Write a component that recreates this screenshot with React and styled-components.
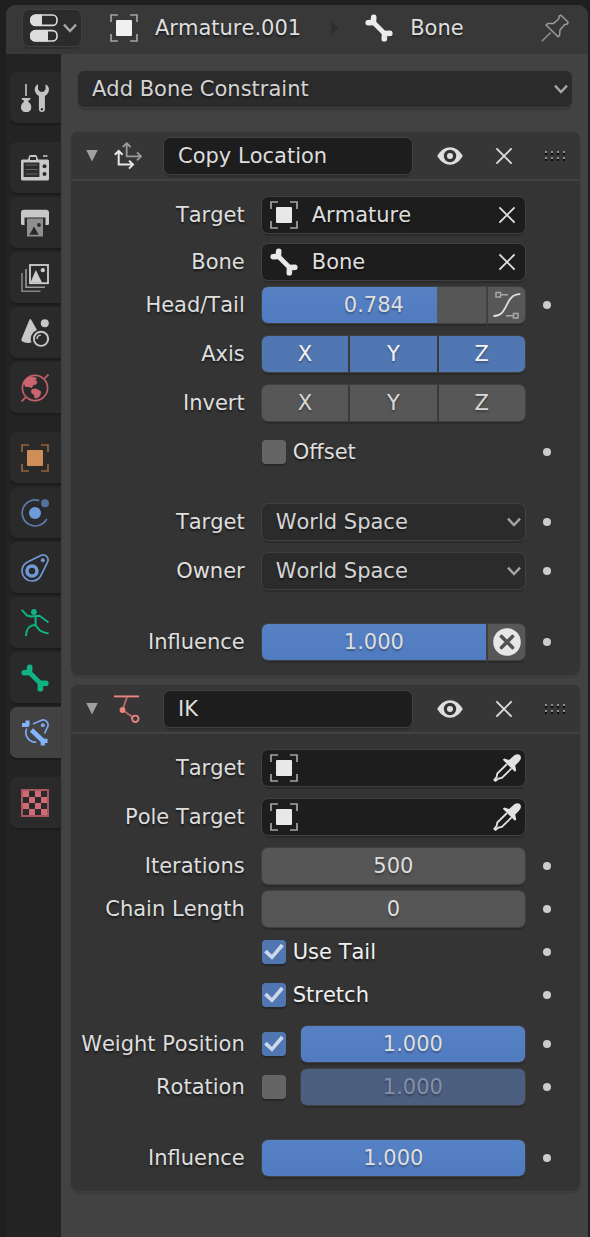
import React, { useState } from 'react';
import styled, { createGlobalStyle, css } from 'styled-components';

const GlobalStyle = createGlobalStyle`
  *, *::before, *::after { box-sizing: border-box; }
  body {
    margin: 0;
    background: #1f1f1f;
    color: #dedede;
    font-family: "DejaVu Sans", Verdana, sans-serif;
    font-size: 21px;
    font-kerning: none;
    line-height: 26px;
  }
  button, input, select { font: inherit; font-kerning: none; color: inherit; margin: 0; }
`;

/* ---------- shell ---------- */

const Page = styled.div`
  min-height: 100vh;
  padding: 5px 2px 0 6px;
  display: flex;
`;

const Editor = styled.div`
  flex: 1;
  min-width: 0;
  display: flex;
  flex-direction: column;
  border-radius: 10px 10px 0 0;
  overflow: hidden;
  background: #424242;
`;

const Header = styled.header`
  display: flex;
  align-items: center;
  height: 49px;
  padding: 0 19px 3px 17px;
  background: #383838;
  text-shadow: 0 2px 2px rgba(0, 0, 0, 0.5);
`;

const Body = styled.div`
  flex: 1;
  display: flex;
`;

const Sidebar = styled.nav`
  flex: none;
  width: 55px;
  padding: 18px 0 18px 4px;
  display: flex;
  flex-direction: column;
  gap: 19px;
  background: #232323;
`;

const TabGroup = styled.div`
  display: flex;
  flex-direction: column;
  gap: 4px;
`;

const Tab = styled.button`
  display: flex;
  align-items: center;
  height: 51px;
  padding: 0 0 0 11px;
  border: 0;
  border-radius: 7px 0 0 7px;
  background: ${(p) => (p.$active ? '#424242' : '#2a2a2a')};
  box-shadow: 0 2px 1px #1c1c1c;
`;

const Content = styled.main`
  flex: 1;
  min-width: 0;
  padding: 17px 8px 45px 10px;
`;

/* ---------- shared control looks ---------- */

const emboss = css`
  border: 0;
  border-radius: 6px;
  box-shadow: 0 0 0 1px #404040, 0 3px 1px rgba(0, 0, 0, 0.18);
`;

const IconButton = styled.button`
  flex: none;
  display: flex;
  align-items: center;
  justify-content: center;
  width: 28px;
  height: 36px;
  padding: 0;
  border: 0;
  background: none;
`;

const EditorTypeButton = styled.button`
  ${emboss}
  display: flex;
  align-items: center;
  gap: 5px;
  height: 36px;
  padding: 0 4px 0 7px;
  background: #2b2b2b;
`;

const Crumb = styled.div`
  display: flex;
  align-items: center;
  gap: 17px;
  margin-left: ${(p) => p.$before}px;
`;

const CrumbArrow = styled.span`
  width: 8px;
  height: 12px;
  margin-left: 30px;
  background: #2e2e2e;
  clip-path: polygon(0 0, 100% 50%, 0 100%);
`;

const PinButton = styled(IconButton)`
  margin-left: auto;
`;

const SelectWrap = styled.div`
  flex: 1;
  min-width: 0;
  display: grid;
  grid-template-columns: minmax(0, 1fr) 18px;
  align-items: center;

  > svg { grid-area: 1 / 2; pointer-events: none; }
`;

const Select = styled.select`
  ${emboss}
  grid-area: 1 / 1 / 2 / 3;
  appearance: none;
  width: 100%;
  height: 36px;
  padding: 0 26px 0 14px;
  background: #2b2b2b;
  color: #d4d4d4;
  text-shadow: 0 2px 2px rgba(0, 0, 0, 0.4);
`;

const AddRow = styled.div`
  display: flex;
  padding: 0 8px 25px 7px;
`;

/* ---------- panels ---------- */

const Panels = styled.div`
  display: flex;
  flex-direction: column;
  gap: 10px;
`;

const Panel = styled.section`
  border-radius: 8px;
  background: #343434;
  box-shadow: 0 0 0 1px #3f3f3f, 0 3px 0 #3c3c3c;
`;

const PanelHeader = styled.div`
  display: flex;
  align-items: center;
  height: 49px;
  padding: 0 14px 0 15px;
  border-bottom: 2px solid #414141;
  border-radius: 8px 8px 0 0;
  background: #363636;
`;

const Disclosure = styled.button`
  flex: none;
  width: 12px;
  height: 12px;
  margin-right: 16px;
  padding: 0;
  border: 0;
  background: #a0a0a0;
  clip-path: polygon(0 0, 100% 0, 50% 100%);
`;

const NameInput = styled.input`
  ${emboss}
  flex: 1;
  min-width: 0;
  height: 36px;
  margin: 0 24px 0 22px;
  padding: 0 14px;
  background: #1d1d1d;
  color: #dedede;
`;

const PanelActions = styled.div`
  display: flex;
  align-items: center;
  gap: 26px;
`;

const PanelBody = styled.div`
  padding: 16px 0 15px;
  text-shadow: 0 2px 2px rgba(0, 0, 0, 0.5);
`;

const gaps = { none: 0, tight: 7, field: 11, loose: 13, group: 34, section: 35 };

const Row = styled.div`
  display: grid;
  grid-template-columns: minmax(0, 33fr) minmax(0, 50fr) 10px;
  column-gap: 17px;
  align-items: center;
  height: 36px;
  margin-top: ${(p) => gaps[p.$gap]}px;
  padding-right: 28px;
`;

const RowLabel = styled.label`
  grid-column: 1;
  justify-self: end;
  white-space: nowrap;
`;

const Control = styled.div`
  grid-column: 2;
  display: flex;
  align-items: center;
`;

const KeyDot = styled.button`
  grid-column: 3;
  justify-self: center;
  width: 8px;
  height: 8px;
  padding: 0;
  border: 0;
  border-radius: 50%;
  background: #cccccc;
`;

const IdField = styled.div`
  ${emboss}
  flex: 1;
  min-width: 0;
  display: flex;
  align-items: center;
  height: 36px;
  padding: 0 4px 0 8px;
  background: #1d1d1d;
`;

const IdInput = styled.input`
  flex: 1;
  min-width: 0;
  height: 36px;
  padding: 0 0 0 14px;
  border: 0;
  background: none;
  text-shadow: inherit;
`;

const NumberField = styled.input`
  ${emboss}
  flex: 1;
  min-width: 0;
  height: 36px;
  padding: 0;
  text-align: center;
  text-shadow: 0 2px 2px rgba(0, 0, 0, 0.3);
  border-radius: ${(p) => (p.$joined ? '6px 0 0 6px' : '6px')};
  color: ${(p) => (p.disabled ? '#8390a5' : '#dedede')};
  background: ${(p) =>
    p.disabled
      ? '#4c5f80'
      : `linear-gradient(90deg, transparent ${p.$fill}%, #565656 ${p.$fill}%),
         linear-gradient(#5781c5, #517bc0)`};
`;

const SideButton = styled.button`
  ${emboss}
  flex: none;
  display: flex;
  align-items: center;
  justify-content: center;
  width: 37px;
  height: 36px;
  margin-left: 2px;
  padding: 0;
  border-radius: 0 6px 6px 0;
  background: #575757;
`;

const Segments = styled.div`
  ${emboss}
  flex: 1;
  display: grid;
  grid-template-columns: repeat(3, 1fr);
  gap: 2px;
  overflow: hidden;
  background: #3a3a3a;
`;

const Segment = styled.button`
  height: 36px;
  padding: 0;
  border: 0;
  text-shadow: 0 2px 2px rgba(0, 0, 0, 0.3);
  background: ${(p) => (p['aria-pressed'] ? '#5177b3' : '#575757')};
  color: ${(p) => (p['aria-pressed'] ? '#f2f2f2' : '#d8d8d8')};
`;

const CheckLabel = styled.label`
  display: flex;
  align-items: center;
  gap: 7px;
  color: ${(p) => (p.$on ? '#f0f0f0' : '#dedede')};
`;

const CheckBox = styled.input`
  appearance: none;
  flex: none;
  width: 24px;
  height: 24px;
  margin-right: ${(p) => (p.$spaced ? 15 : 0)}px;
  border-radius: 4px;
  background: #656565;
  box-shadow: 0 2px 1px rgba(0, 0, 0, 0.25);

  &:checked { background: #5177b3; }
  &:checked::before {
    content: "";
    display: block;
    height: 24px;
    background: #ccd8ea;
    clip-path: polygon(10% 52%, 21% 41%, 42% 61%, 80% 16%, 92% 26%, 43% 82%);
  }
`;

/* ---------- icons ---------- */

const Icon = ({ children }) => (
  <svg width="28" height="28" viewBox="0 0 28 28" fill="none" aria-hidden="true">
    {children}
  </svg>
);

const ChevronIcon = () => (
  <svg width="14" height="10" viewBox="0 0 14 10" fill="none" aria-hidden="true">
    <path d="M1 1.700 7 8 13 1.700" stroke="#a6a6a6" strokeWidth="2.400" />
  </svg>
);

const PropertiesIcon = () => (
  <Icon>
    <rect x="1" y="1" width="26" height="10.4" rx="4.5" stroke="#dcdcdc" strokeWidth="1.6" />
    <path d="M12 .5H5.5a5.3 5.3 0 0 0 0 11.400H12z" fill="#dcdcdc" />
    <rect x="1" y="16.6" width="26" height="10.4" rx="4.5" stroke="#dcdcdc" strokeWidth="1.6" />
    <path d="M18 16H5.5a5.6 5.6 0 0 0 0 11.600H18z" fill="#dcdcdc" />
  </Icon>
);

const ObjectIcon = ({ fill = '#e8e8e8', frame = '#a3a3a3' }) => (
  <Icon>
    <path d="M1 8V1h7M20 1h7v7M27 20v7h-7M8 27H1v-7" stroke={frame} strokeWidth="1.7" />
    <rect x="6" y="6" width="16" height="16" rx="1" fill={fill} />
  </Icon>
);

const BoneIcon = ({ color = '#ececec' }) => (
  <Icon>
    <path d="M8 8 20 20" stroke={color} strokeWidth="4.6" />
    <path
      d="M8.700 3.200 8.400 8.400 3.200 8.700M24.800 19.300 19.600 19.600 19.300 24.800"
      stroke={color} strokeWidth="5.600" strokeLinecap="round" strokeLinejoin="round"
    />
  </Icon>
);

const PinIcon = () => (
  <Icon>
    <path
      d="M20 1.2 27 8 26.5 10 23.8 10.4 19 16 18.6 21.4 17 22.8 5 11 6.8 9.6 12.3 9.6 17.8 4.8 18.2 2Z"
      stroke="#9a9a9a" strokeWidth="1.5" strokeLinejoin="round"
    />
    <path d="M9.6 18.6.8 27.3" stroke="#8c8c8c" strokeWidth="1.5" />
  </Icon>
);

const ToolIcon = () => (
  <Icon>
    <path d="M5 0v12" stroke="#a8a8a8" strokeWidth="2" />
    <path d="M.8 14h8.600v1.600l-2 1v1.500c2 1.400 2.900 3 2.900 5.100 0 3-2 5-5.200 5S0 26.200 0 23.200c0-2 .9-3.700 2.800-5.100v-1.500l-2-1z" fill="#c4c4c4" />
    <path
      fillRule="evenodd"
      d="M17 .2C13.600 2.200 13 5.300 14.500 8.600c.7 1.500 1.800 2.500 3.400 3.400V25a3 3 0 0 0 6 0V12c1.600-.9 2.700-1.900 3.300-3.400C28.700 5.300 28 2.200 24.600.2V5.200L22.700 7.800H19L17 5.200zM20.900 24a1.200 1.200 0 1 1 0 2.400 1.200 1.200 0 0 1 0-2.400z"
      fill="#c4c4c4"
    />
  </Icon>
);

const RenderIcon = () => (
  <Icon>
    <path
      fillRule="evenodd"
      d="M7 5.500 8 2.200Q8.500 1 9.500 1h5q1 0 1.500 1.200L17 5.500h9.500q1.500 0 1.500 1.500V25q0 1.500-1.500 1.500h-25Q0 26.500 0 25V7q0-1.500 1.500-1.500zM9 3v3h6v-3z"
      fill="#c8c8c8"
    />
    <path d="M22 2h4.500" stroke="#c8c8c8" strokeWidth="1.600" />
    <rect x="2.600" y="8.500" width="15.800" height="14.500" fill="#2c2c2c" />
    <path d="M4.500 11h12M4.500 15.500h12M4.500 20h12" stroke="#666" strokeWidth="1" />
    <circle cx="23.500" cy="12.200" r="2" fill="#2a2a2a" />
    <circle cx="23.500" cy="20" r="2" fill="#2a2a2a" />
  </Icon>
);

const OutputIcon = () => (
  <Icon>
    <path d="M6 9.500h16V27.500H6z" fill="#8f8f8f" />
    <path d="M8.400 25.800 13 17.500l4.700 8.300z" fill="#2a2a2a" />
    <circle cx="18" cy="16" r="1.900" fill="#2a2a2a" />
    <path d="M3 .7h22q3 0 3 3V14.500q0 1.500-1.500 1.500H24.500V8.500H3.500V16H1.500Q0 16 0 14.500V3.700q0-3 3-3z" fill="#c8c8c8" />
  </Icon>
);

const ViewLayerIcon = () => (
  <Icon>
    <path d="M1 9v18.200h18.500" stroke="#858585" strokeWidth="1.600" />
    <path d="M5 5v18.200h19" stroke="#9a9a9a" strokeWidth="1.600" />
    <rect x="9" y="1" width="18" height="18.200" stroke="#cfcfcf" strokeWidth="1.800" />
    <path d="M9.500 18.500 14.800 6 21 18.500z" fill="#cfcfcf" />
    <circle cx="21.800" cy="6.200" r="2.100" fill="#cfcfcf" />
  </Icon>
);

const SceneIcon = () => (
  <Icon>
    <path d="M8.400.8q1-1.400 1.800 0L16 11a9.500 9.500 0 0 0-5.500 12.500Q5 24.800 1.400 22.500 0 21.500.5 20z" fill="#c8c8c8" />
    <circle cx="23.800" cy="4.200" r="4" fill="#c8c8c8" />
    <circle cx="20" cy="19.800" r="7.100" stroke="#c8c8c8" strokeWidth="1.900" />
    <path d="M16 20a4 4 0 0 1 3.800-4" stroke="#c8c8c8" strokeWidth="1.600" />
  </Icon>
);

const WorldIcon = () => (
  <Icon>
    <circle cx="14" cy="14" r="12.600" stroke="#c25f69" strokeWidth="1.700" />
    <path d="M.5 27.500 4.600 23.400M23.400 4.600 27.500.5" stroke="#c25f69" strokeWidth="1.700" />
    <path
      d="M3 8.500 6 4.500 11 3 15.500 4.500 13.500 6.500 16 7.500 15 10 12.500 10.500 10.500 13.500 8 12.500 4.500 12.500zM11 15.500l4-.500 4.500 2.500-.5 3.500-2 2.500-3 .5-.500-3-3-2.500z"
      fill="#cb6670" stroke="#cb6670" strokeWidth="1" strokeLinejoin="round"
    />
  </Icon>
);

const PhysicsIcon = () => (
  <Icon>
    <path d="M18.200 1.600A13 13 0 1 0 25.700 20" stroke="#5b7aad" strokeWidth="1.700" />
    <circle cx="14" cy="14" r="6" fill="#6f9adb" />
    <circle cx="24" cy="4.200" r="4" fill="#54719f" />
  </Icon>
);

const ConstraintIcon = () => (
  <Icon>
    <path d="M6.600 8 19.800 1.500A5 5 0 0 1 26.500 8.200L20 21.400A10 10 0 1 1 6.600 8z" stroke="#7099d9" strokeWidth="1.700" />
    <circle cx="11" cy="17" r="5" stroke="#7099d9" strokeWidth="3.600" />
    <circle cx="21.800" cy="6.200" r="2" fill="#7099d9" />
  </Icon>
);

const ArmatureIcon = () => (
  <Icon>
    <circle cx="12.900" cy="3" r="2.900" fill="#0fb384" />
    <g stroke="#0fb384" strokeWidth="2">
      <path d="M.7.900 6 6.500 11 7.800M10 7.600 18.500 6.800 27.500 13.500" />
      <path d="M14.600 7v9C8 16 5.500 19.500 5 27M14.600 16c2.500 4 5 8 13 8.400" />
    </g>
  </Icon>
);

const BoneConstraintIcon = () => (
  <Icon>
    <path d="M12 5 19.800 1.500A5 5 0 0 1 26.500 8.200L23.500 14.500M5.800 9.500a9.500 9.500 0 0 0 9.500 13.500" stroke="#7aa9ee" strokeWidth="1.700" />
    <circle cx="21.800" cy="6.200" r="2" fill="#7aa9ee" />
    <g stroke="#83b5ff">
      <path d="M6.500 1.500v4.500H1" strokeWidth="4" strokeLinejoin="round" />
      <path d="M10.500 11 21.500 21.500" strokeWidth="4.600" />
      <path d="M26.500 21.800H21.800V26.500" strokeWidth="4.200" strokeLinejoin="round" />
    </g>
  </Icon>
);

const checkerCells = [0, 1, 2, 3].flatMap((r) =>
  [0, 1, 2, 3].filter((c) => (r + c) % 2 === 0).map((c) => ({ x: 2 + c * 6, y: 2 + r * 6 })),
);

const TextureIcon = () => (
  <Icon>
    <rect x="1" y="1" width="26" height="26" stroke="#a9565f" strokeWidth="2" />
    {checkerCells.map(({ x, y }) => (
      <rect key={`${x}-${y}`} x={x} y={y} width="6" height="6" fill="#cf6b75" />
    ))}
  </Icon>
);

const CopyLocationIcon = () => (
  <Icon>
    <path d="M12.700 10V1.500M8.800 5 12.700 1.200 16.600 5M12.700 9v5.300H26M23 10.300 27 14.300 23 18.300" stroke="#9b9b9b" strokeWidth="1.800" />
    <path d="M4.700 9.500V22.600H18M.8 12.800 4.700 9 8.600 12.800M15 18.600 19 22.600 15 26.600" stroke="#e6e6e6" strokeWidth="2" />
  </Icon>
);

const IkIcon = () => (
  <Icon>
    <path d="M13 2 8.500 15 21 23.800" stroke="#b3686a" strokeWidth="1.900" />
    <path d="M0 1.400h25" stroke="#ee8482" strokeWidth="1.900" />
    <circle cx="8.500" cy="15" r="2.900" fill="#ee8482" />
    <circle cx="21.300" cy="23.800" r="3.200" fill="#363636" stroke="#ee8482" strokeWidth="1.900" />
  </Icon>
);

const EyeIcon = () => (
  <Icon>
    <path d="M1.200 14C5 8 9.200 5.300 14 5.300S23 8 26.800 14C23 20 18.800 22.700 14 22.700S5 20 1.200 14z" fill="#dedede" />
    <circle cx="14" cy="14" r="6.200" fill="#333" />
    <circle cx="14" cy="14" r="3" fill="#dedede" />
  </Icon>
);

const CloseIcon = () => (
  <Icon>
    <path d="M6.400 6.400 21.600 21.600M21.600 6.400 6.400 21.600" stroke="#dedede" strokeWidth="1.900" />
  </Icon>
);

const GripIcon = () => (
  <svg width="22" height="12" viewBox="0 0 22 12" aria-hidden="true">
    {[0, 6, 12, 18].map((x) =>
      [1, 7].map((y) => (
        <g key={`${x}-${y}`}>
          <rect x={x + 1} y={y + 2} width="2" height="2" fill="#0c0c0c" />
          <rect x={x + 1} y={y} width="2" height="2" fill="#8e8e8e" />
        </g>
      )),
    )}
  </svg>
);

const CurveIcon = () => (
  <Icon>
    <path d="M3 1.500h4.500v4.500H3zM20.500 22.500H25V27h-4.500zM7.500 3.700H15M13 24.700h7.500" stroke="#a8a8a8" strokeWidth="1.500" />
    <path d="M.5 25C16 25.500 11 3 27.300 3.200" stroke="#dedede" strokeWidth="1.800" />
  </Icon>
);

const RemoveIcon = () => (
  <Icon>
    <circle cx="14" cy="14" r="13.800" fill="#e6e6e6" />
    <path d="M8.500 8.500 19.500 19.500M19.500 8.500 8.500 19.500" stroke="#525252" strokeWidth="3.600" strokeLinecap="round" />
  </Icon>
);

const EyedropperIcon = () => (
  <Icon>
    <path
      d="M20 2.500C22.500-.3 25.500-.3 27 1.200s1.300 4.400-1.300 6.900l-3.500 3.500 1 4.800-1.300 1.400L9.800 5.700l1.400-1.300 4.800 1.500z"
      fill="#e2e2e2"
    />
    <path
      d="M14 10 4.300 19.500 3.600 23 .8 26.600M18.600 14.400 8.800 23.800 5.400 24.500 1.900 27.400"
      stroke="#e2e2e2" strokeWidth="1.800"
    />
  </Icon>
);

/* ---------- composed controls ---------- */

const Dropdown = ({ id, options, label }) => (
  <SelectWrap>
    <Select id={id} aria-label={label}>
      {options.map((o) => (
        <option key={o}>{o}</option>
      ))}
    </Select>
    <ChevronIcon />
  </SelectWrap>
);

const Property = ({ id, label, gap = 'tight', keyed, children }) => (
  <Row $gap={gap}>
    {label && <RowLabel htmlFor={id}>{label}</RowLabel>}
    <Control>{children}</Control>
    {keyed && <KeyDot aria-label={`Animate ${label || id}`} />}
  </Row>
);

const IdPicker = ({ id, icon, value, action, actionLabel }) => (
  <IdField>
    {icon}
    <IdInput id={id} defaultValue={value} />
    <IconButton aria-label={actionLabel}>{action}</IconButton>
  </IdField>
);

const AxisToggles = ({ name, initial }) => {
  const [on, setOn] = useState(initial);
  return (
    <Segments role="group" aria-label={name}>
      {['X', 'Y', 'Z'].map((axis, i) => (
        <Segment key={axis} aria-pressed={on[i]} onClick={() => setOn(on.map((v, j) => (j === i ? !v : v)))}>
          {axis}
        </Segment>
      ))}
    </Segments>
  );
};

const Toggle = ({ label, initial }) => {
  const [on, setOn] = useState(initial);
  return (
    <CheckLabel $on={on}>
      <CheckBox type="checkbox" checked={on} onChange={() => setOn(!on)} />
      {label}
    </CheckLabel>
  );
};

const ConstraintPanel = ({ name, icon, children }) => (
  <Panel>
    <PanelHeader>
      <Disclosure aria-label={`Collapse ${name}`} />
      {icon}
      <NameInput defaultValue={name} aria-label="Constraint name" />
      <PanelActions>
        <IconButton aria-label="Toggle constraint"><EyeIcon /></IconButton>
        <IconButton aria-label="Delete constraint"><CloseIcon /></IconButton>
        <GripIcon />
      </PanelActions>
    </PanelHeader>
    <PanelBody>{children}</PanelBody>
  </Panel>
);

const tabGroups = [
  [['Tool', <ToolIcon />]],
  [
    ['Render', <RenderIcon />],
    ['Output', <OutputIcon />],
    ['View Layer', <ViewLayerIcon />],
    ['Scene', <SceneIcon />],
    ['World', <WorldIcon />],
  ],
  [
    ['Object', <ObjectIcon fill="#cf8e58" frame="#94633c" />],
    ['Physics', <PhysicsIcon />],
    ['Object Constraints', <ConstraintIcon />],
    ['Armature', <ArmatureIcon />],
    ['Bone', <BoneIcon color="#0fb384" />],
    ['Bone Constraints', <BoneConstraintIcon />],
  ],
  [['Texture', <TextureIcon />]],
];

export default function App() {
  return (
    <Page>
      <GlobalStyle />
      <Editor>
        <Header>
          <EditorTypeButton aria-label="Editor type">
            <PropertiesIcon />
            <ChevronIcon />
          </EditorTypeButton>
          <Crumb $before={29}>
            <ObjectIcon fill="#f0f0f0" />
            Armature.001
          </Crumb>
          <CrumbArrow />
          <Crumb $before={26}>
            <BoneIcon />
            Bone
          </Crumb>
          <PinButton aria-label="Pin"><PinIcon /></PinButton>
        </Header>
        <Body>
          <Sidebar aria-label="Properties tabs">
            {tabGroups.map((group) => (
              <TabGroup key={group[0][0]}>
                {group.map(([name, icon]) => (
                  <Tab key={name} aria-label={name} $active={name === 'Bone Constraints'}>
                    {icon}
                  </Tab>
                ))}
              </TabGroup>
            ))}
          </Sidebar>
          <Content>
            <AddRow>
              <Dropdown label="Add Bone Constraint" options={['Add Bone Constraint']} />
            </AddRow>
            <Panels>
              <ConstraintPanel name="Copy Location" icon={<CopyLocationIcon />}>
                <Property id="cl-target" label="Target" gap="none">
                  <IdPicker id="cl-target" icon={<ObjectIcon />} value="Armature" action={<CloseIcon />} actionLabel="Clear target" />
                </Property>
                <Property id="cl-bone" label="Bone" gap="field">
                  <IdPicker id="cl-bone" icon={<BoneIcon color="#e8e8e8" />} value="Bone" action={<CloseIcon />} actionLabel="Clear bone" />
                </Property>
                <Property id="cl-head" label="Head/Tail" keyed>
                  <NumberField id="cl-head" defaultValue="0.784" $fill={78} $joined />
                  <SideButton aria-label="Follow B-Bone"><CurveIcon /></SideButton>
                </Property>
                <Property label="Axis" gap="loose">
                  <AxisToggles name="Axis" initial={[true, true, true]} />
                </Property>
                <Property label="Invert" gap="loose">
                  <AxisToggles name="Invert" initial={[false, false, false]} />
                </Property>
                <Property id="Offset" gap="loose" keyed>
                  <Toggle label="Offset" initial={false} />
                </Property>
                <Property id="cl-space" label="Target" gap="group" keyed>
                  <Dropdown id="cl-space" options={['World Space']} />
                </Property>
                <Property id="cl-owner" label="Owner" gap="loose" keyed>
                  <Dropdown id="cl-owner" options={['World Space']} />
                </Property>
                <Property id="cl-influence" label="Influence" gap="section" keyed>
                  <NumberField id="cl-influence" defaultValue="1.000" $fill={100} $joined />
                  <SideButton aria-label="Disable and keep transform"><RemoveIcon /></SideButton>
                </Property>
              </ConstraintPanel>

              <ConstraintPanel name="IK" icon={<IkIcon />}>
                <Property id="ik-target" label="Target" gap="none">
                  <IdPicker id="ik-target" icon={<ObjectIcon />} action={<EyedropperIcon />} actionLabel="Pick target" />
                </Property>
                <Property id="ik-pole" label="Pole Target" gap="loose">
                  <IdPicker id="ik-pole" icon={<ObjectIcon />} action={<EyedropperIcon />} actionLabel="Pick pole target" />
                </Property>
                <Property id="ik-iterations" label="Iterations" gap="loose" keyed>
                  <NumberField id="ik-iterations" defaultValue="500" $fill={0} />
                </Property>
                <Property id="ik-chain" label="Chain Length" keyed>
                  <NumberField id="ik-chain" defaultValue="0" $fill={0} />
                </Property>
                <Property id="Use Tail" keyed>
                  <Toggle label="Use Tail" initial />
                </Property>
                <Property id="Stretch" keyed>
                  <Toggle label="Stretch" initial />
                </Property>
                <Property id="ik-weight" label="Weight Position" gap="loose" keyed>
                  <CheckBox type="checkbox" defaultChecked $spaced aria-label="Use weight position" />
                  <NumberField id="ik-weight" defaultValue="1.000" $fill={100} />
                </Property>
                <Property id="ik-rotation" label="Rotation" keyed>
                  <CheckBox type="checkbox" $spaced aria-label="Use rotation" />
                  <NumberField id="ik-rotation" defaultValue="1.000" $fill={100} disabled />
                </Property>
                <Property id="ik-influence" label="Influence" gap="section" keyed>
                  <NumberField id="ik-influence" defaultValue="1.000" $fill={100} />
                </Property>
              </ConstraintPanel>
            </Panels>
          </Content>
        </Body>
      </Editor>
    </Page>
  );
}
